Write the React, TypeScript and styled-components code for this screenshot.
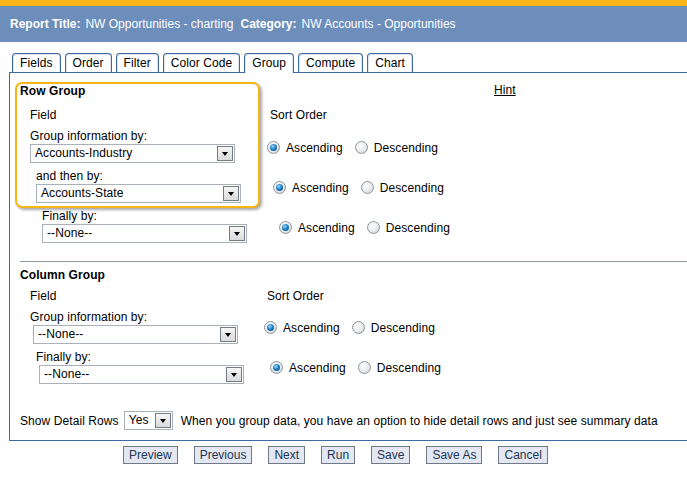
import React from 'react';
import styled, { createGlobalStyle, css } from 'styled-components';

const GlobalStyle = createGlobalStyle`
  html, body {
    margin: 0;
    padding: 0;
    background: #fff;
  }
  body {
    font-family: "Liberation Sans", Arial, sans-serif;
    font-size: 12px;
    color: #000;
  }
`;

const Page = styled.div`
  width: 687px;
  height: 480px;
  overflow: hidden;
  background: #fff;
`;

const TopStripe = styled.div`
  height: 6px;
  background: #fdb515;
`;

const HeaderBar = styled.div`
  height: 36px;
  display: flex;
  align-items: center;
  padding-left: 10px;
  background: #6d8ebb;
  color: #fff;
  white-space: nowrap;
`;

const HeaderLabel = styled.b`
  margin-right: 5px;
`;

const HeaderValue = styled.span`
  margin-right: 7px;
`;

const TabStrip = styled.div`
  display: flex;
  align-items: flex-start;
  gap: 4px;
  height: 19px;
  margin-top: 11px;
  padding-left: 12px;
  letter-spacing: 0.08px;
`;

const Tab = styled.div<{ $active?: boolean }>`
  position: relative;
  z-index: ${(p) => (p.$active ? 2 : 0)};
  box-sizing: border-box;
  height: ${(p) => (p.$active ? 20 : 19)}px;
  padding: 2px 7px 0;
  line-height: 15px;
  border: 1px solid #3d6aa2;
  border-bottom: none;
  border-radius: 4px 4px 0 0;
  background: #fff;
  box-shadow: inset 1px 1px 0 #dfe4ea, inset -1px 0 0 #dfe4ea;
  white-space: nowrap;
`;

const Panel = styled.div`
  position: relative;
  z-index: 1;
  margin-left: 9px;
  padding-bottom: 10px;
  border-top: 1px solid #3d6aa2;
  border-left: 1px solid #3d6aa2;
  border-bottom: 1px solid #3d6aa2;
  background: #fff;
  letter-spacing: 0.08px;
`;

const RowSection = styled.div`
  display: flex;
  align-items: flex-start;
  margin-top: 9px;
  padding-left: 5px;
`;

const LeftColumn = styled.div<{ $width: number }>`
  flex: none;
  width: ${(p) => p.$width}px;
`;

const RightColumn = styled.div<{ $offset: number }>`
  flex: none;
  margin-left: ${(p) => p.$offset}px;
`;

const HighlightBox = styled.div`
  box-sizing: border-box;
  width: 245px;
  padding: 0 3px 3px;
  border: 2px solid #f7b417;
  border-radius: 7px;
  box-shadow: 2px 2px 3px rgba(0, 0, 0, 0.35);
  background: #fff;
`;

const SectionTitle = styled.div<{ $top?: number }>`
  margin-top: ${(p) => p.$top ?? 0}px;
  font-weight: bold;
  line-height: 14px;
`;

const ColumnHeading = styled.div<{ $top: number; $indent: number }>`
  margin-top: ${(p) => p.$top}px;
  padding-left: ${(p) => p.$indent}px;
  line-height: 14px;
`;

const HintLink = styled.a`
  display: block;
  margin-top: 1px;
  padding-left: 227px;
  line-height: 14px;
  color: #000;
  text-decoration: underline;
`;

const FieldBlock = styled.div<{ $top: number }>`
  margin-top: ${(p) => p.$top}px;
`;

const FieldLabel = styled.div<{ $indent: number }>`
  padding-left: ${(p) => p.$indent}px;
  line-height: 15px;
  white-space: nowrap;
`;

const DropDown = styled.div<{ $indent?: number; $width: number }>`
  box-sizing: border-box;
  display: flex;
  align-items: center;
  width: ${(p) => p.$width}px;
  height: 19px;
  margin-left: ${(p) => p.$indent ?? 0}px;
  padding: 0 1px 0 4px;
  border: 1px solid #a9b0ba;
  background: #fff;
  white-space: nowrap;
  flex: none;
`;

const DropDownText = styled.span`
  flex: 1;
  line-height: 15px;
`;

const DropDownArrow = styled.span`
  box-sizing: border-box;
  display: flex;
  align-items: center;
  justify-content: center;
  width: 16px;
  height: 15px;
  border: 1px solid #737b86;
  background: linear-gradient(#f6f6f6, #d9dadc);

  &::before {
    content: '';
    border-left: 3.5px solid transparent;
    border-right: 3.5px solid transparent;
    border-top: 4px solid #000;
  }
`;

const RadioRow = styled.div<{ $top: number; $indent: number }>`
  display: flex;
  align-items: center;
  height: 14px;
  margin-top: ${(p) => p.$top}px;
  padding-left: ${(p) => p.$indent}px;
  white-space: nowrap;
`;

const RadioDot = styled.span<{ $checked?: boolean }>`
  position: relative;
  box-sizing: border-box;
  flex: none;
  width: 13px;
  height: 13px;
  margin-top: -2px;
  border: 1px solid #8d96a0;
  border-radius: 50%;
  background: radial-gradient(circle at 40% 35%, #ffffff 0%, #e7e9eb 55%, #c3c8cd 100%);

  ${(p) =>
    p.$checked &&
    css`
      &::after {
        content: '';
        position: absolute;
        left: 2px;
        top: 2px;
        width: 7px;
        height: 7px;
        border-radius: 50%;
        background: radial-gradient(circle at 40% 35%, #9fd8ff 0%, #2383c8 45%, #0c3d70 100%);
      }
    `}
`;

const RadioText = styled.span<{ $gapAfter?: number }>`
  margin-left: 6px;
  margin-right: ${(p) => p.$gapAfter ?? 0}px;
  line-height: 14px;
`;

const Divider = styled.div`
  height: 1px;
  margin: 18px 0 0 10px;
  background: #8e97a8;
`;

const ColumnSection = styled.div`
  padding-left: 10px;
`;

const ColumnBody = styled.div`
  display: flex;
  align-items: flex-start;
`;

const DetailRow = styled.div`
  display: flex;
  align-items: center;
  height: 19px;
  margin-top: 27px;
  padding-left: 10px;
  white-space: nowrap;
`;

const DetailNote = styled.span`
  margin-left: 8px;
`;

const ButtonBar = styled.div`
  display: flex;
  gap: 16px;
  margin-top: 5px;
  padding-left: 123px;
`;

const ActionButton = styled.button`
  box-sizing: border-box;
  height: 18px;
  padding: 0 5px;
  border: 1px solid #6f7886;
  border-radius: 0;
  background: #e2e7f2;
  color: #223652;
  font-family: "Liberation Sans", Arial, sans-serif;
  font-size: 12px;
  line-height: 16px;
`;

const tabs = ['Fields', 'Order', 'Filter', 'Color Code', 'Group', 'Compute', 'Chart'];
const buttons = ['Preview', 'Previous', 'Next', 'Run', 'Save', 'Save As', 'Cancel'];

function Select({ value, width, indent }: { value: string; width: number; indent?: number }) {
  return (
    <DropDown $width={width} $indent={indent}>
      <DropDownText>{value}</DropDownText>
      <DropDownArrow />
    </DropDown>
  );
}

function SortChoice({ top, indent }: { top: number; indent: number }) {
  return (
    <RadioRow $top={top} $indent={indent}>
      <RadioDot $checked />
      <RadioText $gapAfter={12}>Ascending</RadioText>
      <RadioDot />
      <RadioText>Descending</RadioText>
    </RadioRow>
  );
}

export default function App() {
  return (
    <Page>
      <GlobalStyle />
      <TopStripe />
      <HeaderBar>
        <HeaderLabel>Report Title:</HeaderLabel>
        <HeaderValue>NW Opportunities - charting</HeaderValue>
        <HeaderLabel>Category:</HeaderLabel>
        <HeaderValue>NW Accounts - Opportunities</HeaderValue>
      </HeaderBar>

      <TabStrip>
        {tabs.map((t) => (
          <Tab key={t} $active={t === 'Group'}>
            {t}
          </Tab>
        ))}
      </TabStrip>

      <Panel>
        <RowSection>
          <LeftColumn $width={245}>
            <HighlightBox>
              <SectionTitle>Row Group</SectionTitle>
              <ColumnHeading $top={10} $indent={10}>Field</ColumnHeading>
              <FieldBlock $top={7}>
                <FieldLabel $indent={10}>Group information by:</FieldLabel>
                <Select value="Accounts-Industry" width={205} indent={10} />
              </FieldBlock>
              <FieldBlock $top={6}>
                <FieldLabel $indent={16}>and then by:</FieldLabel>
                <Select value="Accounts-State" width={205} indent={16} />
              </FieldBlock>
            </HighlightBox>
            <FieldBlock $top={1}>
              <FieldLabel $indent={27}>Finally by:</FieldLabel>
              <Select value="--None--" width={205} indent={27} />
            </FieldBlock>
          </LeftColumn>
          <RightColumn $offset={7}>
            <HintLink>Hint</HintLink>
            <ColumnHeading $top={11} $indent={3}>Sort Order</ColumnHeading>
            <SortChoice top={19} indent={0} />
            <SortChoice top={26} indent={6} />
            <SortChoice top={26} indent={12} />
          </RightColumn>
        </RowSection>

        <Divider />

        <ColumnSection>
          <SectionTitle $top={6}>Column Group</SectionTitle>
          <ColumnBody>
            <LeftColumn $width={244}>
              <ColumnHeading $top={7} $indent={10}>Field</ColumnHeading>
              <FieldBlock $top={7}>
                <FieldLabel $indent={10}>Group information by:</FieldLabel>
                <Select value="--None--" width={205} indent={13} />
              </FieldBlock>
              <FieldBlock $top={6}>
                <FieldLabel $indent={16}>Finally by:</FieldLabel>
                <Select value="--None--" width={205} indent={19} />
              </FieldBlock>
            </LeftColumn>
            <RightColumn $offset={0}>
              <ColumnHeading $top={7} $indent={3}>Sort Order</ColumnHeading>
              <SortChoice top={18} indent={0} />
              <SortChoice top={26} indent={6} />
            </RightColumn>
          </ColumnBody>
        </ColumnSection>

        <DetailRow>
          Show Detail Rows
          <Select value="Yes" width={49} indent={5} />
          <DetailNote>
            When you group data, you have an option to hide detail rows and just see summary data
          </DetailNote>
        </DetailRow>
      </Panel>

      <ButtonBar>
        {buttons.map((b) => (
          <ActionButton key={b} type="button">
            {b}
          </ActionButton>
        ))}
      </ButtonBar>
    </Page>
  );
}
